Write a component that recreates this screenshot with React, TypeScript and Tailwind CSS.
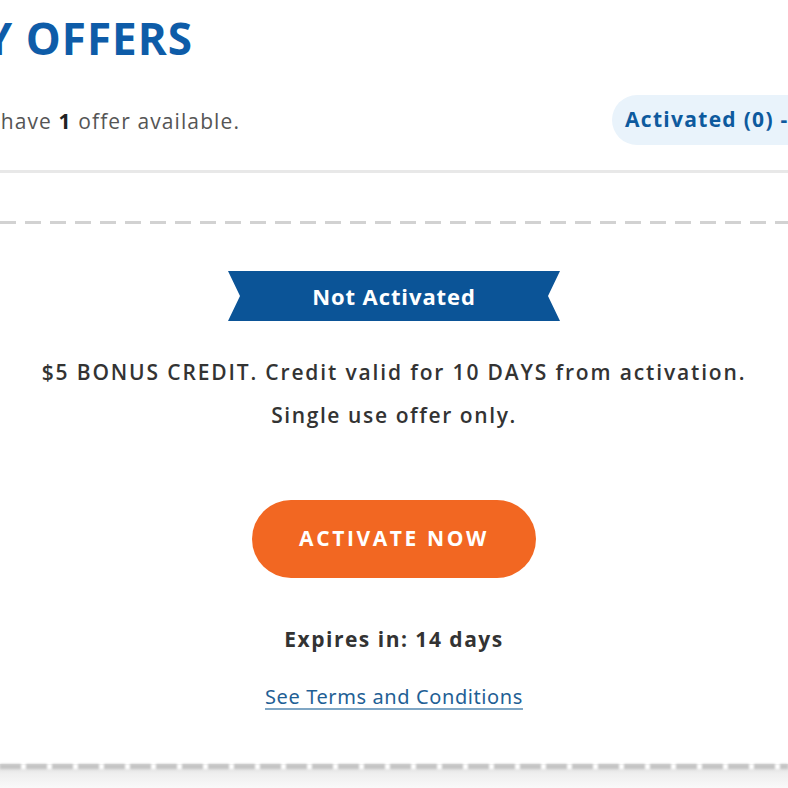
import React from "react";

const font = { fontFamily: '"Open Sans", "Noto Sans", sans-serif' };

function Ribbon() {
  return (
    <div className="relative w-[332px] h-[50px]">
      <svg width="332" height="50" viewBox="0 0 332 50" className="absolute inset-0">
        <polygon points="0,0 332,0 320,25 332,50 0,50 12,25" fill="#0b5497" />
      </svg>
      <div className="relative h-full flex items-center justify-center text-white font-bold text-[22px] tracking-[0.9px]">
        Not Activated
      </div>
    </div>
  );
}

export default function App() {
  return (
    <div className="w-[788px] h-[788px] overflow-hidden bg-white relative" style={font}>
      {/* header */}
      <div className="pt-[16px] h-[170px] flex flex-col">
        <div className="w-[193px] flex justify-end whitespace-nowrap">
          <h1 className="text-[44px] leading-[44px] font-bold text-[#0e5ca8] tracking-[1px]">MY OFFERS</h1>
        </div>
        <div className="mt-[35px] flex items-center justify-between">
          <div className="w-[240px] flex justify-end whitespace-nowrap">
            <span className="text-[21px] tracking-[1.1px] text-[#555] pt-[4px]">You have <span className="font-bold text-[#222]">1</span> offer available.</span>
          </div>
          <div className="w-[176px] h-[50px] rounded-l-[25px] bg-[#e9f3fb] flex items-center pl-[13px] overflow-hidden whitespace-nowrap">
            <span className="text-[21px] font-bold text-[#0d5a9e] tracking-[1.3px]">Activated (0) - Expired (0)</span>
          </div>
        </div>
      </div>
      {/* divider */}
      <div className="h-[3px] bg-[#e8e8e8]" />
      {/* card */}
      <div className="pt-[48px]">
        <div className="h-[3px] bg-[repeating-linear-gradient(90deg,#d2d2d2_0px,#d2d2d2_16px,transparent_16px,transparent_25px)]" />
        <div className="flex flex-col items-center pt-[47px] h-[540px]">
          <Ribbon />
          <div className="mt-[30px] text-center text-[21px] font-semibold text-[#333] leading-[43px] whitespace-nowrap">
            <div className="tracking-[1.85px]">$5 BONUS CREDIT. Credit valid for 10 DAYS from activation.</div>
            <div className="tracking-[1.6px]">Single use offer only.</div>
          </div>
          <button className="mt-[63px] w-[284px] h-[78px] rounded-full bg-[#f26722] text-white font-bold text-[21px] tracking-[2.6px]">
            ACTIVATE NOW
          </button>
          <div className="mt-[46px] text-[21px] font-bold text-[#333] tracking-[1.5px]">Expires in: 14 days</div>
          <a className="mt-[26px] text-[20px] text-[#1f5f95] underline underline-offset-[4px] decoration-[#7fa6c4] tracking-[0.6px]" style={{ fontFamily: '"Noto Sans", sans-serif' }}>
            See Terms and Conditions
          </a>
        </div>
        <div className="relative h-[25px] bg-[linear-gradient(180deg,#dcdcdc_0%,#efefef_40%,#fafafa_100%)]">
          <div className="absolute top-0 left-0 right-0 h-[5px] blur-[1px] bg-[repeating-linear-gradient(90deg,#c4c4c4_0px,#c4c4c4_21px,#ffffff_21px,#ffffff_26px)]" />
        </div>
      </div>
    </div>
  );
}
